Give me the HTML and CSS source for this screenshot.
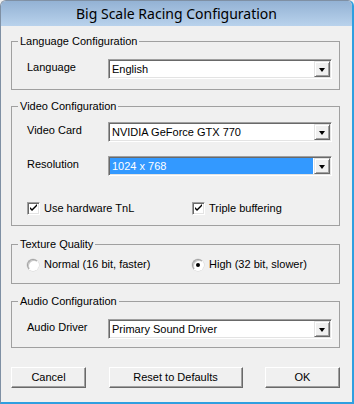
FILE: index.html
```html
<!DOCTYPE html>
<html lang="en">
<head>
  <meta charset="UTF-8">
  <meta name="viewport" content="width=device-width, initial-scale=1.0">
  <title>Big Scale Racing Configuration</title>
  <link rel="stylesheet" href="styles.css">
</head>
<body>
  <div class="window">
    <div class="titlebar">Big Scale Racing Configuration</div>

    <div class="client">
      <fieldset class="group group-language">
        <legend>Language Configuration</legend>
        <div class="field-row">
          <label class="field-label">Language</label>
          <div class="combo">
            <span class="combo-value">English</span>
            <span class="combo-btn"><span class="arrow"></span></span>
          </div>
        </div>
      </fieldset>

      <fieldset class="group group-video">
        <legend>Video Configuration</legend>
        <div class="field-row">
          <label class="field-label">Video Card</label>
          <div class="combo">
            <span class="combo-value">NVIDIA GeForce GTX 770</span>
            <span class="combo-btn"><span class="arrow"></span></span>
          </div>
        </div>
        <div class="field-row">
          <label class="field-label">Resolution</label>
          <div class="combo">
            <span class="combo-value selected">1024 x 768</span>
            <span class="combo-btn"><span class="arrow"></span></span>
          </div>
        </div>
        <div class="option-row check-row">
          <label class="option">
            <span class="checkbox">
              <svg width="9" height="9" viewBox="0 0 9 9"><path d="M1 3v2l2 2 5-5V0L3 5z" fill="#000"/></svg>
            </span>
            Use hardware TnL
          </label>
          <label class="option">
            <span class="checkbox">
              <svg width="9" height="9" viewBox="0 0 9 9"><path d="M1 3v2l2 2 5-5V0L3 5z" fill="#000"/></svg>
            </span>
            Triple buffering
          </label>
        </div>
      </fieldset>

      <fieldset class="group group-texture">
        <legend>Texture Quality</legend>
        <div class="option-row">
          <label class="option">
            <span class="radio"></span>
            Normal (16 bit, faster)
          </label>
          <label class="option">
            <span class="radio checked"><span class="dot"></span></span>
            High (32 bit, slower)
          </label>
        </div>
      </fieldset>

      <fieldset class="group group-audio">
        <legend>Audio Configuration</legend>
        <div class="field-row">
          <label class="field-label">Audio Driver</label>
          <div class="combo">
            <span class="combo-value">Primary Sound Driver</span>
            <span class="combo-btn"><span class="arrow"></span></span>
          </div>
        </div>
      </fieldset>

      <div class="buttons">
        <button class="btn btn-small">Cancel</button>
        <button class="btn btn-wide">Reset to Defaults</button>
        <button class="btn btn-small">OK</button>
      </div>
    </div>
  </div>
</body>
</html>
```

FILE: styles.css
```css
body {
  margin: 0;
  background: #f0f0f0;
}
.window {
  width: 354px;
  height: 404px;
  box-sizing: border-box;
  display: flex;
  flex-direction: column;
  background: #f0f0f0;
  border: 1px solid #7f90a4;
  border-right: 2px solid #2f9fe0;
  border-bottom: 2px solid #2f9fe0;
  border-radius: 6px 6px 0 0;
  font: 11px/13px "Liberation Sans", Arial, sans-serif;
  color: #000;
  overflow: hidden;
}
.titlebar {
  height: 25px;
  line-height: 26px;
  text-align: center;
  font-family: "Noto Sans", "Open Sans", sans-serif;
  font-size: 14px;
  color: #000;
  background: linear-gradient(#93b2d4, #b9d2ec);
}
.client {
  flex: 1;
  display: flex;
  flex-direction: column;
  padding: 9px 12px 0 10px;
}
.group {
  margin: 0;
  min-width: 0;
  border: 1px solid #a0a0a0;
  padding: 11px 7px 10px 15px;
}
.group legend {
  padding: 0 2px;
  margin-left: -9px;
  line-height: 13px;
}
.group-video {
  margin-top: 10px;
  padding-top: 9px;
}
.group-texture {
  margin-top: 12px;
  padding-top: 7px;
  padding-bottom: 12px;
}
.group-audio {
  margin-top: 11px;
  padding-bottom: 8px;
}
.field-row {
  display: flex;
  align-items: flex-start;
}
.field-row + .field-row {
  margin-top: 14px;
}
.field-label {
  width: 81px;
  flex: none;
  padding-top: 2px;
}
.combo {
  flex: 1;
  display: flex;
  height: 20px;
  box-sizing: border-box;
  background: #fff;
  border: 1px solid;
  border-color: #a0a0a0 #fff #fff #a0a0a0;
  box-shadow: inset 1px 1px #696969, inset -1px -1px #e3e3e3;
  padding: 1px;
}
.combo-value {
  flex: 1;
  padding-left: 2px;
  line-height: 16px;
  white-space: nowrap;
  overflow: hidden;
}
.combo-value.selected {
  background: #3399ff;
  color: #fff;
  margin-right: 1px;
}
.combo-btn {
  width: 16px;
  height: 16px;
  box-sizing: border-box;
  background: #f0f0f0;
  border: 1px solid;
  border-color: #e3e3e3 #696969 #696969 #e3e3e3;
  box-shadow: inset 1px 1px #fff, inset -1px -1px #a0a0a0;
  display: flex;
  align-items: center;
  justify-content: center;
}
.arrow {
  width: 0;
  height: 0;
  border-left: 3.5px solid transparent;
  border-right: 3.5px solid transparent;
  border-top: 4px solid #000;
  margin-top: 1px;
}
.option-row {
  display: grid;
  grid-template-columns: 165px 1fr;
}
.check-row {
  margin-top: 26px;
}
.option {
  display: flex;
  align-items: center;
  gap: 4px;
  white-space: nowrap;
}
.checkbox {
  width: 13px;
  height: 13px;
  box-sizing: border-box;
  flex: none;
  background: #fff;
  border: 1px solid;
  border-color: #a0a0a0 #fff #fff #a0a0a0;
  box-shadow: inset 1px 1px #696969, inset -1px -1px #e3e3e3;
  display: flex;
  align-items: center;
  justify-content: center;
}
.checkbox svg {
  display: block;
}
.radio {
  width: 12px;
  height: 12px;
  box-sizing: border-box;
  flex: none;
  margin-right: 1px;
  border-radius: 50%;
  background: #fff;
  border: 1px solid;
  border-color: #a0a0a0 #fff #fff #a0a0a0;
  box-shadow: inset 1px 1px #c8c8c8, 0 0 0 0.5px #d4d4d4;
  display: flex;
  align-items: center;
  justify-content: center;
}
.dot {
  width: 4px;
  height: 4px;
  border-radius: 50%;
  background: #000;
}
.buttons {
  display: flex;
  justify-content: space-between;
  margin-top: 19px;
}
.btn {
  height: 21px;
  box-sizing: border-box;
  font: inherit;
  color: #000;
  background: #f0f0f0;
  border: 1px solid;
  border-color: #fff #696969 #696969 #fff;
  box-shadow: inset -1px -1px #a0a0a0;
  padding: 0;
}
.btn-small {
  width: 75px;
}
.btn-wide {
  width: 134px;
}
```
